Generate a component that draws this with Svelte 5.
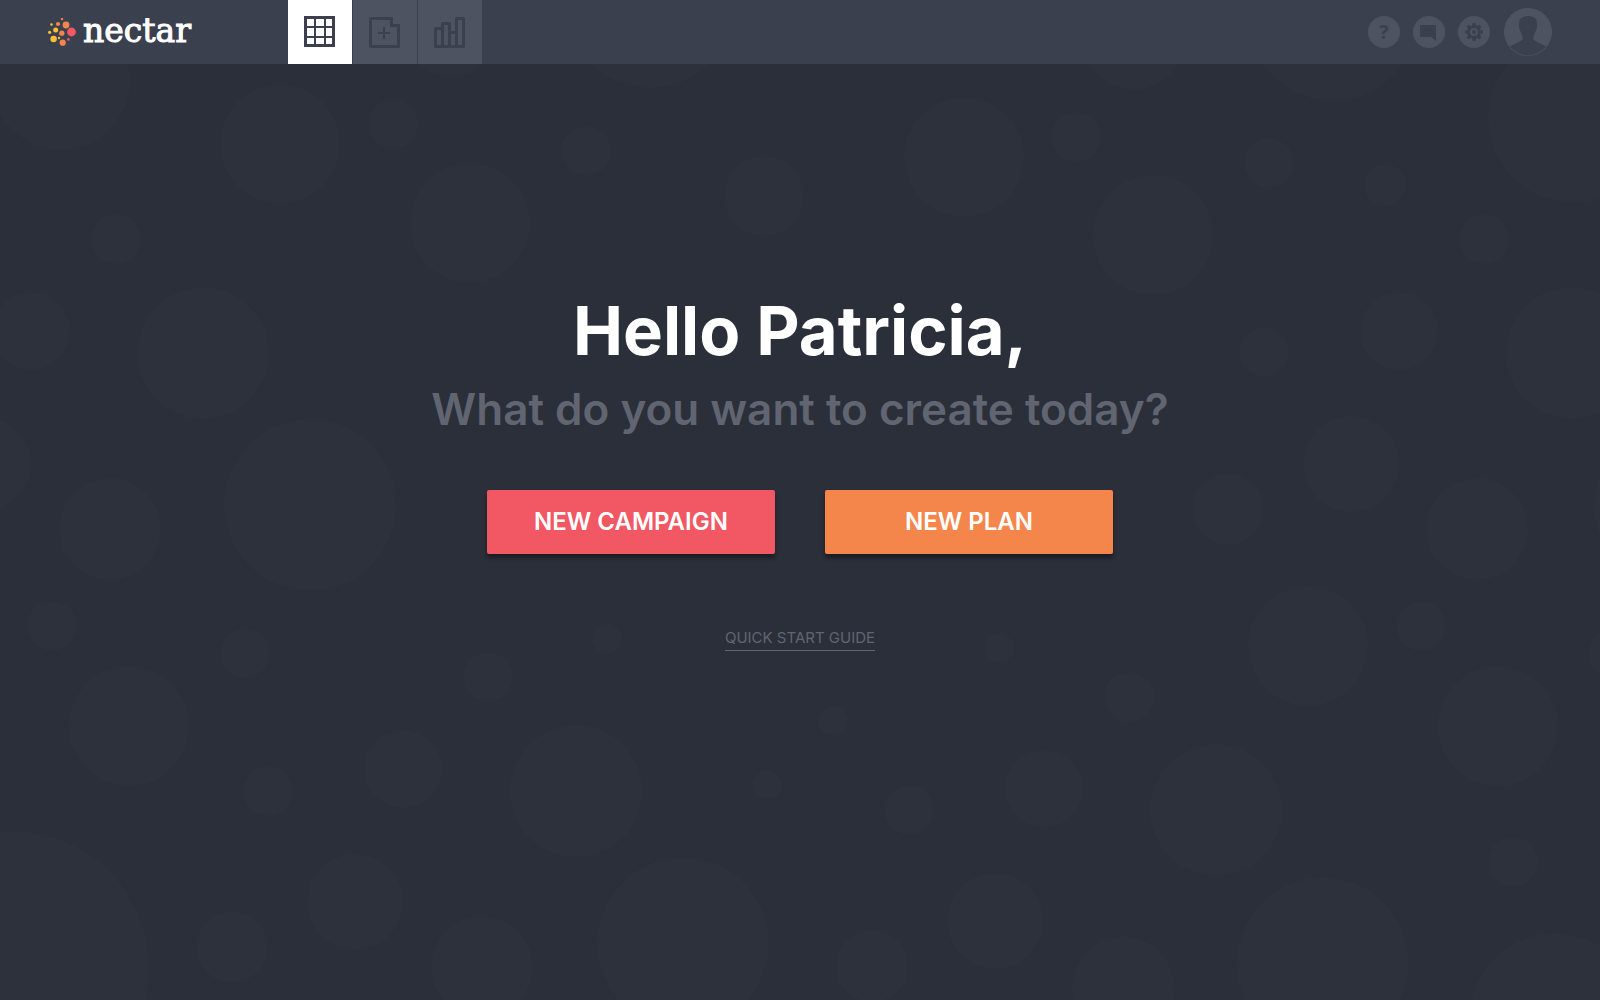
<script>
  const bubbles = [
    [61, 81, 69], [280, 144, 60], [393, 124, 25], [451, 30, 47], [650, 2, 86],
    [586, 151, 25], [470, 223, 60], [764, 196, 40], [116, 239, 25], [31, 331, 39],
    [203, 353, 66], [-16, 464, 47], [310, 505, 86], [110, 529, 51], [1134, 39, 51],
    [1333, 16, 85], [1573, 118, 85], [964, 157, 60], [1076, 137, 25], [1269, 163, 25],
    [1385, 185, 21], [1484, 239, 25], [1153, 235, 60], [1264, 352, 25], [1399, 331, 39],
    [1572, 353, 66], [1351, 464, 48], [1228, 509, 36], [1477, 529, 51], [1680, 505, 86],
    [52, 626, 25], [245, 653, 25], [129, 726, 60], [268, 791, 25], [403, 769, 39],
    [488, 677, 25], [607, 639, 15], [576, 791, 66], [767, 785, 15], [13, 967, 136],
    [355, 902, 48], [232, 947, 36], [482, 967, 51], [683, 943, 86], [1308, 646, 60],
    [1421, 626, 25], [1613, 653, 25], [1498, 726, 60], [999, 648, 15], [1129, 697, 25],
    [833, 721, 15], [1044, 789, 39], [909, 810, 25], [1216, 810, 66], [1513, 862, 25],
    [995, 921, 48], [872, 966, 36], [1123, 987, 51], [1323, 963, 86], [1555, 1019, 86]
  ];

  const dots = [
    { x: 14, y: 1, r: 1.2, fill: '#f5864b' },
    { x: 18, y: 7, r: 3.4, fill: '#f5864b' },
    { x: 10, y: 6, r: 2.1, fill: '#f5864b' },
    { x: 3.5, y: 6.5, r: 1.2, fill: '#fcbf35' },
    { x: 7.7, y: 12, r: 2.5, fill: '#fcbf35' },
    { x: 1.6, y: 14.3, r: 1.6, fill: '#fcbf35' },
    { x: 23.5, y: 14, r: 4.4, fill: '#f25764' },
    { x: 13.8, y: 15.2, r: 2.6, fill: '#f5864b' },
    { x: 5.6, y: 21, r: 3.2, fill: '#fcbf35' },
    { x: 11, y: 20, r: 1.2, fill: '#fcbf35' },
    { x: 20.4, y: 21.4, r: 1.3, fill: '#f25764' },
    { x: 14.7, y: 24.7, r: 3.1, fill: '#f5864b' }
  ];

  const teeth = [0, 45, 90, 135, 180, 225, 270, 315];

  let activeTab = $state('grid');
</script>

<div class="page">
  <svg class="bubbles" viewBox="0 0 1600 1000" preserveAspectRatio="xMidYMin slice" aria-hidden="true">
    {#each bubbles as [x, y, r]}
      <circle cx={x} cy={y} r={r} />
    {/each}
  </svg>

  <header class="header">
    <a class="logo" href="/">
      <svg width="28" height="28" viewBox="0 0 28 28" aria-hidden="true">
        {#each dots as dot}
          <circle cx={dot.x} cy={dot.y} r={dot.r} fill={dot.fill} />
        {/each}
      </svg>
      <span>nectar</span>
    </a>

    <nav class="tabs">
      <button class="tab" class:active={activeTab === 'grid'} aria-label="Dashboard" onclick={() => activeTab = 'grid'}>
        <svg width="32" height="32" viewBox="0 0 32 32">
          <path fill-rule="evenodd" d="M0 0h31v31h-31zM3 3v7h7v-7zM12 3v7h8v-7zM22 3v7h6v-7zM3 12v8h7v-8zM12 12v8h8v-8zM22 12v8h6v-8zM3 22v6h7v-6zM12 22v6h8v-6zM22 22v6h6v-6z" />
        </svg>
      </button>
      <button class="tab" class:active={activeTab === 'new'} aria-label="New" onclick={() => activeTab = 'new'}>
        <svg width="32" height="32" viewBox="0 0 32 32">
          <path fill-rule="evenodd" d="M1 1h23v7h7v23l-1 1h-29l-1 -1v-29zM3 4v25h25v-18h-7v-7z" />
          <path d="M14 11h2v5h5v2h-5v5h-2v-5h-5v-2h5z" />
        </svg>
      </button>
      <button class="tab" class:active={activeTab === 'reports'} aria-label="Reports" onclick={() => activeTab = 'reports'}>
        <svg width="32" height="32" viewBox="0 0 32 32">
          <path fill-rule="evenodd" d="M0 12l1 -1h6v-4l1 -1h8l1 1v8h4v-13l1 -1h8l1 1v29l-1 1h-29l-1 -1zM3 14v15h4v-15zM10 9v20h4v-20zM17 18v11h4v-11zM24 4v25h4v-25z" />
        </svg>
      </button>
    </nav>

    <div class="actions">
      <button class="round help" aria-label="Help">?</button>
      <button class="round" aria-label="Messages">
        <svg width="32" height="32" viewBox="0 0 32 32">
          <path d="M7 9h16v16l-5 -4h-11z" />
        </svg>
      </button>
      <button class="round" aria-label="Settings">
        <svg width="32" height="32" viewBox="0 0 32 32">
          <circle class="gear" cx="16" cy="16" r="5.5" />
          {#each teeth as angle}
            <rect x="14.2" y="7" width="3.6" height="3.4" rx="0.8" transform={`rotate(${angle} 16 16)`} />
          {/each}
          <circle cx="16" cy="16" r="2" />
        </svg>
      </button>
      <button class="round avatar" aria-label="Profile">
        <svg width="48" height="48" viewBox="0 0 48 48">
          <path d="M24 8C27 8 29 9 31 10C33 12 33 14 33 18C33 22 31 24 30 26C29.500 28 29.500 29 29.500 31C31 34 36 35 42 38.500A22.500 22.500 0 0 1 6 38.500C12 35 17 34 18.500 31C18.500 29 18.500 28 18 26C17 24 15 22 15 18C15 14 15 12 17 10C19 9 21 8 24 8Z" />
        </svg>
      </button>
    </div>
  </header>

  <main class="welcome">
    <h1>Hello Patricia,</h1>
    <p>What do you want to create today?</p>
    <div class="buttons">
      <button class="btn campaign">NEW CAMPAIGN</button>
      <button class="btn plan">NEW PLAN</button>
    </div>
    <a class="guide" href="/guide">QUICK START GUIDE</a>
  </main>
</div>

<style>
  :global(body) {
    background: #2b2f3a;
    margin: 0;
  }

  .page {
    font-family: Inter, "Open Sans", sans-serif;
    min-height: 100vh;
    overflow: hidden;
    position: relative;
  }

  .bubbles {
    fill: #2d313c;
    height: 100%;
    left: 0;
    position: absolute;
    top: 0;
    width: 100%;
  }

  button {
    border: 0;
    cursor: pointer;
    font-family: inherit;
    padding: 0;
  }

  .header {
    align-items: center;
    background: #3b404f;
    box-sizing: border-box;
    display: flex;
    height: 64px;
    padding: 0 48px;
    position: relative;
  }

  .logo {
    align-items: center;
    color: #fff;
    display: flex;
    flex: 0 0 240px;
    font-family: "DejaVu Serif", serif;
    font-size: 33px;
    gap: 7px;
    line-height: 48px;
    text-decoration: none;
  }

  .logo span {
    padding-bottom: 2px;
    -webkit-text-stroke: 1px #fff;
  }

  .tabs {
    display: flex;
    gap: 1px;
  }

  .tab {
    background: #4d5361;
    fill: #3b404f;
    height: 64px;
    width: 64px;
  }

  .tab.active {
    background: #fff;
  }

  .tab svg,
  .round svg {
    display: block;
    margin: 0 auto;
  }

  .actions {
    align-items: center;
    display: flex;
    gap: 13px;
    margin-left: auto;
  }

  .round {
    background: #4d5361;
    border-radius: 50%;
    color: #3b404f;
    fill: #3b404f;
    height: 32px;
    width: 32px;
  }

  .help {
    font-family: "Open Sans", sans-serif;
    font-size: 20px;
    font-weight: 700;
    line-height: 32px;
  }

  .gear {
    fill: none;
    stroke: #3b404f;
    stroke-width: 3;
  }

  .avatar {
    height: 48px;
    margin-left: 1px;
    width: 48px;
  }

  .welcome {
    align-items: center;
    display: flex;
    flex-direction: column;
    padding: 227px 24px 48px;
    position: relative;
    text-align: center;
  }

  h1 {
    color: #fff;
    font-size: 67px;
    font-weight: 700;
    line-height: 80px;
    margin: 0;
  }

  p {
    color: #616571;
    font-size: 44px;
    font-weight: 600;
    line-height: 56px;
    margin: 10px 0 53px;
  }

  .buttons {
    display: flex;
    flex-wrap: wrap;
    gap: 50px;
    justify-content: center;
  }

  .btn {
    border-radius: 2px;
    box-shadow: 0 4px 4px rgba(0, 0, 0, 0.4);
    color: #fff;
    font-size: 24px;
    font-weight: 600;
    height: 64px;
    padding-bottom: 2px;
    width: 288px;
  }

  .campaign {
    background: #f25764;
  }

  .plan {
    background: #f5864b;
  }

  .guide {
    border-bottom: 1px solid #616571;
    color: #616571;
    font-size: 15px;
    line-height: 24px;
    margin-top: 72px;
    text-decoration: none;
  }
</style>
